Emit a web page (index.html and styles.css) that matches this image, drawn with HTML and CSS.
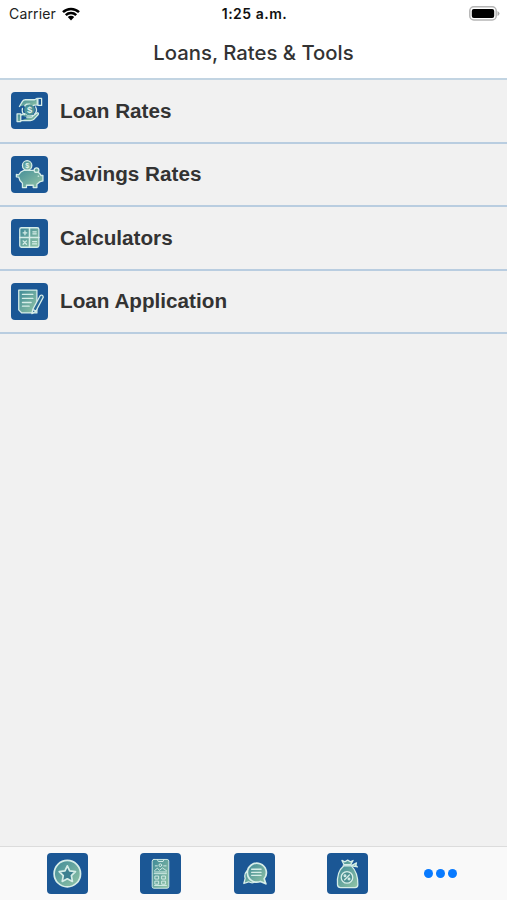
FILE: index.html
```html
<!DOCTYPE html>
<html lang="en">
<head>
    <meta charset="UTF-8">
    <meta name="viewport" content="width=device-width, initial-scale=1.0">
    <title>Loans, Rates &amp; Tools</title>
    <link rel="stylesheet" href="styles.css">
</head>
<body>
    <svg class="defs" width="0" height="0">
        <defs>
            <linearGradient id="mint" x1="0" y1="0" x2="1" y2="1">
                <stop offset="0" stop-color="#3f8a98"/>
                <stop offset="1" stop-color="#94c6a6"/>
            </linearGradient>
        </defs>
    </svg>

    <header>
        <div class="status-bar">
            <div class="carrier">
                <span>Carrier</span>
                <svg class="wifi" viewBox="0 0 18 14">
                    <path d="M1 5.2a11.4 11.4 0 0 1 16 0M3.8 8.1a7.4 7.4 0 0 1 10.4 0" fill="none" stroke="#000" stroke-width="2.5"/>
                    <path d="M5.8 10.1a4.6 4.6 0 0 1 6.4 0L9 13.4z"/>
                </svg>
            </div>
            <span class="time">1:25 a.m.</span>
            <svg class="battery" viewBox="0 0 31 15">
                <rect x=".8" y=".8" width="26.4" height="13.2" rx="4" fill="#fff" stroke="#b5b5b5" stroke-width="1.5"/>
                <rect x="2.8" y="2.9" width="22.4" height="9" rx="2"/>
                <path d="M28.5 5v5q2-1 2-2.5t-2-2.5" fill="#aaa"/>
            </svg>
        </div>
        <h1>Loans, Rates &amp; Tools</h1>
    </header>

    <main>
        <a class="row">
            <svg class="icon" viewBox="0 0 110 110">
                <path d="M25 43 34 28q3-5 9-5h27l8-4v19l-9 1-8 5H43l-2-4 6-4h9" fill="url(#mint)"/>
                <path d="M18 65h11v23H18zM29 69l8-4q6-2 10 2l5 2h11q3 4-2 6H47M64 72l14-10q5-1 3 5L67 82q-4 3-9 3H29" fill="url(#mint)"/>
                <path d="M80 19h11v21H80zM34 49q-3 12 6 18M73 44q7 13-3 22"/>
                <circle cx="55" cy="53" r="16" fill="#4a9096" stroke="none"/>
                <text x="55" y="63" class="dollar">$</text>
            </svg>
            <span>Loan Rates</span>
        </a>
        <a class="row">
            <svg class="icon" viewBox="0 0 110 110">
                <path d="M16 55l7 1q5-10 15-13h29l8-6 4 10q8 4 10 11h6v16l-10 3-8 7v10H66v-7H46v7H34V81q-9-6-11-18l-7-1z" fill="url(#mint)"/>
                <circle cx="48" cy="28" r="14" fill="url(#mint)"/>
                <circle cx="76" cy="42" r="7" fill="url(#mint)"/>
                <text x="48" y="36" class="dollar small">$</text>
                <path d="M81 60h1"/>
            </svg>
            <span>Savings Rates</span>
        </a>
        <a class="row">
            <svg class="icon" viewBox="0 0 110 110">
                <rect x="26" y="26" width="57" height="58" rx="5" fill="url(#mint)"/>
                <path d="M55 26v58M26 55h57" stroke-width="4.5"/>
                <path d="M36 41h11M41.5 35v12M65 38h10M65 44h10M36 65l10 10M46 65 36 75M64 67h12M64 74h12"/>
            </svg>
            <span>Calculators</span>
        </a>
        <a class="row">
            <svg class="icon" viewBox="0 0 110 110">
                <path d="M23 21h54v68H32l-9-9z" fill="url(#mint)"/>
                <path d="M34 34h31M34 46h31M34 58h26M34 69h20"/>
                <path d="M65 78 87 37q7-4 9 5L74 84l-12 7zM65 78l9 6" fill="#2b6a96"/>
            </svg>
            <span>Loan Application</span>
        </a>
    </main>

    <nav>
        <a class="tab">
            <svg class="icon" viewBox="0 0 121 121">
                <circle cx="60" cy="61" r="39" fill="url(#mint)" stroke-width="5"/>
                <path d="m60 38 7 15 17 2-12 12 3 17-15-8-15 8 3-17-12-12 17-2z" fill="#3e8090" stroke-width="5"/>
            </svg>
        </a>
        <a class="tab">
            <svg class="icon phone" viewBox="0 0 121 121">
                <rect x="36" y="19" width="49" height="85" rx="5" fill="url(#mint)"/>
                <path d="M51 19l3 6h14l3-6M43 96h35M42 61h36"/>
                <circle cx="60" cy="36" r="4"/>
                <path d="M45 38h6M70 38h7M43 52l8-7 7 6 8-7 12 8M43 56h35"/>
                <path d="M45 68h10v9H45zM65 68h10v9H65zM45 83h10v9H45zM65 83h10v9H65z"/>
            </svg>
        </a>
        <a class="tab">
            <svg class="icon" viewBox="0 0 121 121">
                <path d="M38 53q-9 10-5 22l-4 15 14-5q12 7 24-2z" fill="url(#mint)"/>
                <path d="M89 76 94 91 78 84A28 28 0 1 1 89 76z" fill="url(#mint)" stroke-width="5"/>
                <path d="M52 48h28M52 57h28M52 66h28"/>
            </svg>
        </a>
        <a class="tab">
            <svg class="icon" viewBox="0 0 121 121">
                <path d="M49 38Q28 55 31 94q1 8 9 8h43q8 0 8-8 1-36-19-56z" fill="url(#mint)"/>
                <path d="M50 34 44 22l9 4 8-5 8 5 8-4-7 12zM48 36h26M74 36l13-7-2 8 5 4-16-3" fill="url(#mint)"/>
                <circle cx="59" cy="72" r="17" fill="#4f9192"/>
                <path d="M66 65 52 79"/>
                <circle cx="53" cy="67" r="2.5"/>
                <circle cx="65" cy="77" r="2.5"/>
            </svg>
        </a>
        <a class="tab more">
            <i></i><i></i><i></i>
        </a>
    </nav>
</body>
</html>
```

FILE: styles.css
```css
*{
    box-sizing: border-box;
}
body{
    margin: 0;
    height: 100vh;
    display: flex;
    flex-direction: column;
    background-color: #f1f1f1;
    font-family: "Liberation Sans", Arial, sans-serif;
    color: #333;
}
.defs{
    position: absolute;
}
header{
    height: 80px;
    background-color: #fff;
    border-bottom: 2px solid #c2d4e2;
    font-family: Inter, sans-serif;
}
.status-bar{
    display: grid;
    grid-template-columns: 1fr auto 1fr;
    align-items: center;
    height: 27px;
    padding: 0 7px 0 9px;
    font-size: 14px;
    color: #222;
}
.carrier{
    display: flex;
    align-items: center;
    gap: 6px;
    letter-spacing: 0.15px;
}
.wifi{
    width: 18px;
    height: 14px;
}
.time{
    font-weight: 600;
    letter-spacing: 0.5px;
    color: #111;
}
.battery{
    width: 31px;
    height: 15px;
    justify-self: end;
    margin-top: -1px;
}
h1{
    margin: 0;
    line-height: 51px;
    font-size: 20.3px;
    font-weight: 500;
    text-align: center;
}
main{
    flex: 1;
}
.row{
    display: flex;
    align-items: center;
    height: 63.5px;
    padding-left: 10.5px;
    gap: 12.5px;
    border-bottom: 2px solid #b9cde0;
    font-size: 20.7px;
    font-weight: bold;
}
.icon{
    width: 37px;
    height: 37px;
    border-radius: 4px;
    background-color: #1b5795;
    fill: none;
    stroke: #d6ede8;
    stroke-width: 3.8;
    stroke-linejoin: round;
    stroke-linecap: round;
}
.dollar{
    fill: #e2f3eb;
    stroke: none;
    font-size: 28px;
    font-weight: bold;
    text-anchor: middle;
}
.small{
    font-size: 21px;
}
nav{
    display: flex;
    height: 54px;
    padding: 0 20px 0 21px;
    background-color: #f9f9f9;
    border-top: 1px solid #dcdcdc;
}
.tab{
    flex: 1;
    display: flex;
    align-items: center;
    justify-content: center;
}
.tab .icon{
    width: 41px;
    height: 41px;
}
.tab .phone{
    stroke-width: 2.8;
}
.more{
    gap: 3px;
}
.more i{
    width: 9px;
    height: 9px;
    border-radius: 50%;
    background-color: #087aff;
}
```
